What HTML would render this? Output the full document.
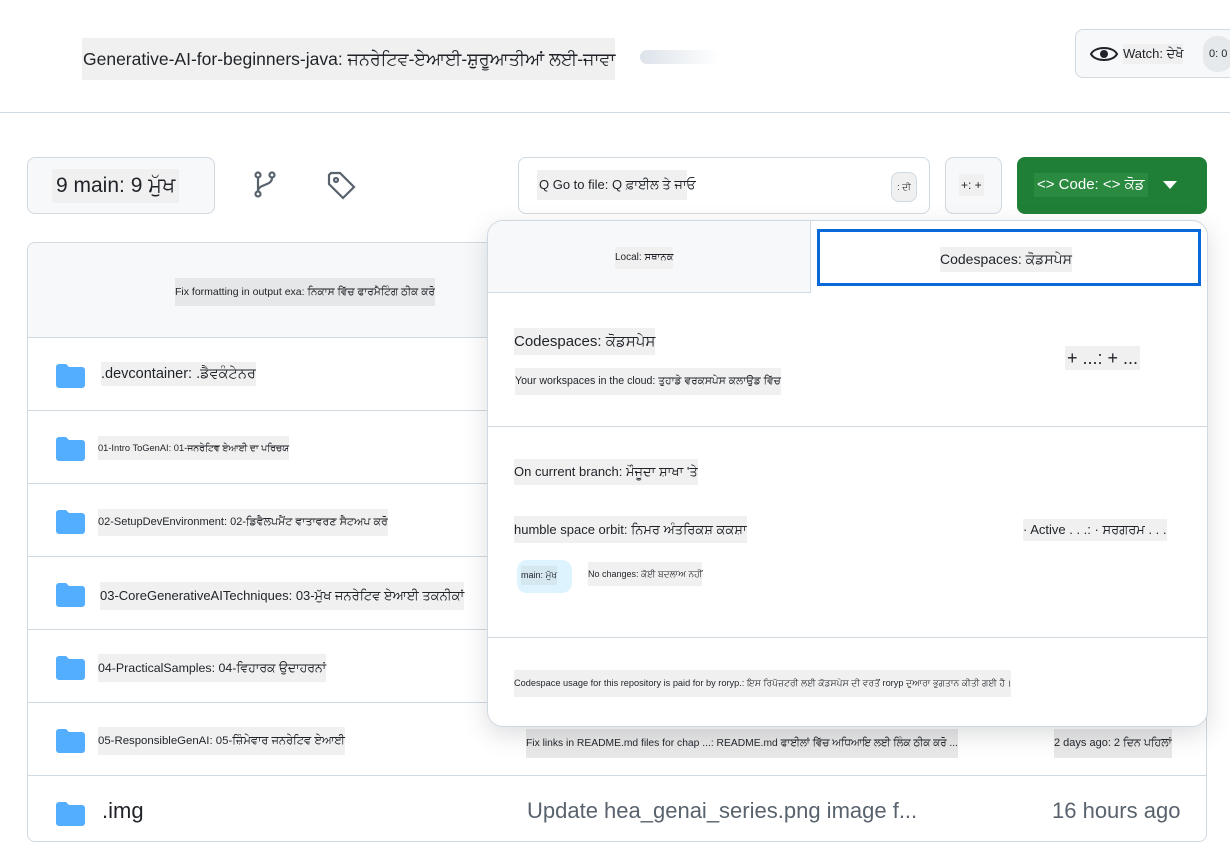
<!DOCTYPE html>
<html><head><meta charset="utf-8"><style>
*{box-sizing:border-box;margin:0;padding:0}
body{width:1230px;height:812px;overflow:hidden;background:#fff;font-family:"Liberation Sans","Noto Sans CJK SC","DejaVu Sans",sans-serif;color:#1f2328;position:relative}
.a{position:absolute}
.t{background:#f0f0f0;white-space:nowrap;position:absolute}
.btn{position:absolute;border:1px solid #d1d9e0;border-radius:8px;background:#f6f8fa}
.row{position:absolute;left:27px;width:1180px;height:73px;border-top:1px solid #d1d9e0}
.fold{position:absolute;left:29px;top:26px;width:29px;height:24px}
</style></head><body>
<div class="t" style="left:82px;top:38px;height:42px;line-height:42px;font-size:17.5px;padding-left:1px">Generative-AI-for-beginners-java: ਜਨਰੇਟਿਵ-ਏਆਈ-ਸ਼ੁਰੂਆਤੀਆਂ ਲਈ-ਜਾਵਾ</div>
<div class="a" style="left:640px;top:50px;width:80px;height:14px;background:linear-gradient(90deg,#dde3ea,#fff);border-radius:7px"></div>
<div class="btn" style="left:1075px;top:29px;width:170px;height:49px;background:#f6f8fa"></div>
<svg class="a" style="left:1089px;top:41px" width="30" height="26" viewBox="0 0 30 26"><path d="M2 13C6 5 24 5 28 13C24 21 6 21 2 13Z" fill="none" stroke="#1f2328" stroke-width="2"/><circle cx="15" cy="13" r="4" fill="#1f2328"/></svg>
<div class="t" style="left:1123px;top:44px;font-size:13px;line-height:20px">Watch: ਦੇਖੋ</div>
<div class="a" style="left:1203px;top:36px;width:30px;height:36px;border-radius:14px;background:#e6e9ec;font-size:11px;line-height:36px;padding-left:6px">0: 0</div>
<div class="a" style="left:0;top:112px;width:1230px;height:1px;background:#d1d9e0"></div>

<div class="btn" style="left:27px;top:157px;width:188px;height:57px"></div>
<div class="t" style="left:52px;top:169px;font-size:21px;line-height:34px;padding:0 4px">9 main: 9 ਮੁੱਖ</div>
<svg class="a" style="left:252px;top:171px" width="26" height="28" viewBox="0 0 26 28" fill="none" stroke="#59636e" stroke-width="2.2"><circle cx="6" cy="4" r="2.5"/><circle cx="20" cy="4" r="2.5"/><circle cx="6" cy="23" r="2.5"/><path d="M6 7v13M20 7c0 8-14 6-14 13"/></svg>
<svg class="a" style="left:326px;top:170px" width="30" height="30" viewBox="0 0 30 30" fill="none" stroke="#59636e" stroke-width="2.2"><path d="M3 5v9l14 14 11-11L14 3H5Z"/><circle cx="10" cy="10" r="2"/></svg>
<div class="btn" style="left:518px;top:157px;width:412px;height:57px;background:#fff"></div>
<div class="t" style="left:537px;top:170px;font-size:13px;line-height:30px;padding:0 2px;width:150px">Q Go to file: Q ਫ਼ਾਈਲ ਤੇ ਜਾਓ</div>
<div class="a" style="left:891px;top:172px;width:26px;height:30px;border:1px solid #d1d9e0;border-radius:8px;background:#f0f0f0;font-size:9px;line-height:28px;text-align:center">: ਦੀ</div>
<div class="btn" style="left:945px;top:157px;width:57px;height:57px"></div>
<div class="t" style="left:959px;top:174px;font-size:12px;line-height:22px;padding:0 2px">+: +</div>
<div class="a" style="left:1017px;top:157px;width:190px;height:57px;background:#1f7f37;border-radius:8px"></div>
<div class="a" style="left:1034px;top:173px;background:#2a8a40;color:#fff;font-size:15px;line-height:24px;padding:0 3px;white-space:nowrap">&lt;&gt; Code: &lt;&gt; ਕੋਡ</div>
<div class="a" style="left:1163px;top:181px;border-left:7px solid transparent;border-right:7px solid transparent;border-top:8px solid #fff"></div>

<div class="a" style="left:27px;top:242px;width:1180px;height:600px;border:1px solid #d1d9e0;border-radius:8px"></div>
<div class="a" style="left:28px;top:243px;width:1178px;height:94px;background:#f6f8fa;border-radius:8px 8px 0 0"></div>
<div class="t" style="left:175px;top:278px;font-size:10.5px;line-height:28px;background:#e6e7e8">Fix formatting in output exa: ਨਿਕਾਸ ਵਿੱਚ ਫਾਰਮੈਟਿੰਗ ਠੀਕ ਕਰੋ</div>

<div class="row" style="top:337px"><svg class="fold" viewBox="0 0 29 24"><path d="M0 3a3 3 0 0 1 3-3h7l3 3h13a3 3 0 0 1 3 3v15a3 3 0 0 1-3 3H3a3 3 0 0 1-3-3Z" fill="#54aeff"/></svg><div class="t" style="left:74px;top:24px;font-size:14.5px;line-height:24px">.devcontainer: .ਡੈਵਕੰਟੇਨਰ</div></div>
<div class="row" style="top:410px"><svg class="fold" viewBox="0 0 29 24"><path d="M0 3a3 3 0 0 1 3-3h7l3 3h13a3 3 0 0 1 3 3v15a3 3 0 0 1-3 3H3a3 3 0 0 1-3-3Z" fill="#54aeff"/></svg><div class="t" style="left:71px;top:25px;font-size:9.3px;line-height:24px">01-Intro ToGenAI: 01-ਜਨਰੇਟਿਵ ਏਆਈ ਦਾ ਪਰਿਚਯ</div></div>
<div class="row" style="top:483px"><svg class="fold" viewBox="0 0 29 24"><path d="M0 3a3 3 0 0 1 3-3h7l3 3h13a3 3 0 0 1 3 3v15a3 3 0 0 1-3 3H3a3 3 0 0 1-3-3Z" fill="#54aeff"/></svg><div class="t" style="left:71px;top:25px;font-size:11px;line-height:27px">02-SetupDevEnvironment: 02-ਡਿਵੈਲਪਮੈਂਟ ਵਾਤਾਵਰਣ ਸੈਟਅਪ ਕਰੋ</div></div>
<div class="row" style="top:556px"><svg class="fold" viewBox="0 0 29 24"><path d="M0 3a3 3 0 0 1 3-3h7l3 3h13a3 3 0 0 1 3 3v15a3 3 0 0 1-3 3H3a3 3 0 0 1-3-3Z" fill="#54aeff"/></svg><div class="t" style="left:73px;top:25px;font-size:13px;line-height:28px">03-CoreGenerativeAITechniques: 03-ਮੁੱਖ ਜਨਰੇਟਿਵ ਏਆਈ ਤਕਨੀਕਾਂ</div></div>
<div class="row" style="top:629px"><svg class="fold" viewBox="0 0 29 24"><path d="M0 3a3 3 0 0 1 3-3h7l3 3h13a3 3 0 0 1 3 3v15a3 3 0 0 1-3 3H3a3 3 0 0 1-3-3Z" fill="#54aeff"/></svg><div class="t" style="left:71px;top:24px;font-size:12.4px;line-height:28px">04-PracticalSamples: 04-ਵਿਹਾਰਕ ਉਦਾਹਰਨਾਂ</div></div>
<div class="row" style="top:702px"><svg class="fold" viewBox="0 0 29 24"><path d="M0 3a3 3 0 0 1 3-3h7l3 3h13a3 3 0 0 1 3 3v15a3 3 0 0 1-3 3H3a3 3 0 0 1-3-3Z" fill="#54aeff"/></svg><div class="t" style="left:71px;top:24px;font-size:11.4px;line-height:28px">05-ResponsibleGenAI: 05-ਜ਼ਿੰਮੇਵਾਰ ਜਨਰੇਟਿਵ ਏਆਈ</div>
<div class="t" style="left:499px;top:26px;font-size:10.3px;line-height:29px;background:#e8e8e8">Fix links in README.md files for chap ...: README.md ਫਾਈਲਾਂ ਵਿੱਚ ਅਧਿਆਇ ਲਈ ਲਿੰਕ ਠੀਕ ਕਰੋ ...</div>
<div class="t" style="left:1027px;top:26px;font-size:11px;line-height:29px;background:#e8e8e8">2 days ago: 2 ਦਿਨ ਪਹਿਲਾਂ</div></div>
<div class="row" style="top:775px"><svg class="fold" viewBox="0 0 29 24"><path d="M0 3a3 3 0 0 1 3-3h7l3 3h13a3 3 0 0 1 3 3v15a3 3 0 0 1-3 3H3a3 3 0 0 1-3-3Z" fill="#54aeff"/></svg><div class="a" style="left:75px;top:22px;font-size:22px;color:#1f2328">.img</div><div class="a" style="left:500px;top:22px;font-size:22px;color:#59636e;white-space:nowrap">Update hea_genai_series.png image f...</div><div class="a" style="left:1025px;top:22px;font-size:22px;color:#59636e;white-space:nowrap">16 hours ago</div></div>

<div class="a" style="left:487px;top:220px;width:721px;height:507px;background:#fff;border:1px solid #d1d9e0;border-radius:16px;box-shadow:0 8px 24px rgba(66,74,83,.18);overflow:hidden">
 <div class="a" style="left:0;top:0;width:323px;height:72px;background:#f6f8fa;border-bottom:1px solid #d1d9e0;border-right:1px solid #d1d9e0"></div>
 <div class="t" style="left:127px;top:26px;font-size:10px;line-height:22px">Local: ਸਥਾਨਕ</div>
 <div class="a" style="left:329px;top:8px;width:384px;height:57px;border:3px solid #0969da"></div>
 <div class="t" style="left:452px;top:26px;font-size:14px;line-height:25px">Codespaces: ਕੋਡਸਪੇਸ</div>
 <div class="t" style="left:26px;top:107px;font-size:15px;line-height:27px">Codespaces: ਕੋਡਸਪੇਸ</div>
 <div class="t" style="left:27px;top:147px;font-size:10.6px;line-height:27px">Your workspaces in the cloud: ਤੁਹਾਡੇ ਵਰਕਸਪੇਸ ਕਲਾਉਡ ਵਿੱਚ</div>
 <div class="t" style="left:577px;top:125px;font-size:18px;line-height:24px;padding:0 2px">+ ...: + ...</div>
 <div class="a" style="left:0;top:205px;width:721px;height:1px;background:#d1d9e0"></div>
 <div class="t" style="left:26px;top:238px;font-size:13px;line-height:26px">On current branch: ਮੌਜੂਦਾ ਸ਼ਾਖਾ 'ਤੇ</div>
 <div class="t" style="left:26px;top:295px;font-size:13px;line-height:27px">humble space orbit: ਨਿਮਰ ਅੰਤਰਿਕਸ਼ ਕਕਸ਼ਾ</div>
 <div class="t" style="left:535px;top:298px;font-size:13px;line-height:22px">· Active . . .: · ਸਰਗਰਮ . . .</div>
 <div class="a" style="left:29px;top:339px;width:55px;height:33px;border-radius:10px;background:#ddf4ff"></div>
 <div class="t" style="left:33px;top:345px;font-size:9px;line-height:19px;background:#d5e8f0">main: ਮੁੱਖ</div>
 <div class="t" style="left:100px;top:341px;font-size:9px;line-height:24px">No changes: ਕੋਈ ਬਦਲਾਅ ਨਹੀਂ</div>
 <div class="a" style="left:0;top:416px;width:721px;height:1px;background:#d1d9e0"></div>
 <div class="t" style="left:26px;top:449px;font-size:9.2px;line-height:27px">Codespace usage for this repository is paid for by roryp.: ਇਸ ਰਿਪੋਜ਼ਟਰੀ ਲਈ ਕੋਡਸਪੇਸ ਦੀ ਵਰਤੋਂ roryp ਦੁਆਰਾ ਭੁਗਤਾਨ ਕੀਤੀ ਗਈ ਹੈ।</div>
</div>
</body></html>
